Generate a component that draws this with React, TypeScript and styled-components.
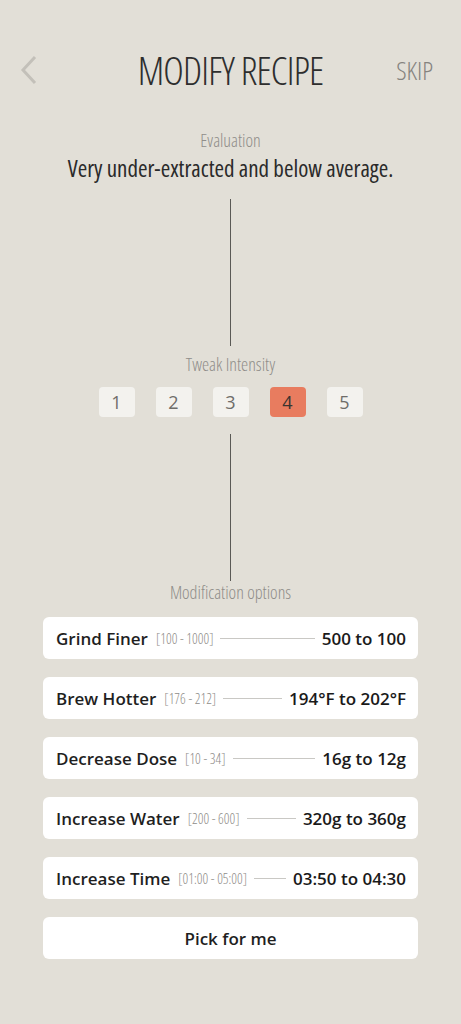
import React, { useState } from 'react';
import styled, { createGlobalStyle } from 'styled-components';

const GlobalStyle = createGlobalStyle`
  html, body {
    margin: 0;
    padding: 0;
    background: #e2dfd7;
  }
  body {
    font-family: "Open Sans", "DejaVu Sans", sans-serif;
  }
`;

// Open Sans is variable here, so the 75% width gives a condensed face
const condensed = `
  font-family: "Open Sans", "DejaVu Sans", sans-serif;
  font-stretch: 75%;
`;

const Screen = styled.div`
  width: 461px;
  min-height: 1024px;
  display: flex;
  flex-direction: column;
  align-items: center;
  background: #e2dfd7;
`;

const Header = styled.header`
  width: 100%;
  box-sizing: border-box;
  height: 44px;
  margin-top: 48px;
  padding: 0 20px;
  display: grid;
  grid-template-columns: 1fr auto 1fr;
  align-items: center;
`;

const BackButton = styled.button`
  border: 0;
  background: none;
  padding: 0;
  width: 26px;
  height: 32px;
  display: flex;
  align-items: center;
  cursor: pointer;
`;

const Title = styled.h1`
  margin: 0;
  text-align: center;
  ${condensed}
  font-weight: 300;
  font-size: 39px;
  line-height: 44px;
  letter-spacing: -0.8px;
  color: #2e2e2e;
`;

const Skip = styled.button`
  border: 0;
  background: none;
  padding: 0;
  margin-right: 8px;
  justify-self: end;
  ${condensed}
  font-weight: 300;
  font-size: 26px;
  color: #85837f;
  cursor: pointer;
`;

const Label = styled.div<{ $top: number }>`
  margin-top: ${(p) => p.$top}px;
  ${condensed}
  font-weight: 300;
  font-size: 18px;
  line-height: 20px;
  color: #8f8d89;
`;

const Evaluation = styled.div`
  margin-top: 4px;
  ${condensed}
  font-weight: 500;
  font-size: 23px;
  line-height: 28px;
  color: #2a2a2a;
`;

const Connector = styled.div<{ $top: number }>`
  margin-top: ${(p) => p.$top}px;
  width: 1px;
  height: 147px;
  background: #5a5955;
`;

const Intensities = styled.div`
  margin-top: 13px;
  display: flex;
  gap: 21px;
`;

const IntensityButton = styled.button<{ $active: boolean }>`
  width: 36px;
  height: 30px;
  border: 0;
  border-radius: 4px;
  padding: 0;
  background: ${(p) => (p.$active ? '#e87c5f' : '#f3f2ee')};
  color: ${(p) => (p.$active ? '#3a3430' : '#6f6d69')};
  font-family: "Open Sans", sans-serif;
  font-size: 18px;
  line-height: 30px;
  cursor: pointer;
`;

const Options = styled.div`
  margin-top: 15px;
  width: 375px;
  display: flex;
  flex-direction: column;
  gap: 18px;
`;

const Card = styled.div`
  height: 42px;
  box-sizing: border-box;
  padding: 0 12px 0 13px;
  background: #ffffff;
  border-radius: 6px;
  display: flex;
  align-items: center;
`;

const OptionName = styled.span`
  font-family: "Open Sans", sans-serif;
  font-weight: 600;
  font-size: 17px;
  color: #1f1f1f;
  white-space: nowrap;
`;

const Range = styled.span`
  margin-left: 8px;
  ${condensed}
  font-weight: 300;
  font-size: 14px;
  color: #8f8d89;
  white-space: nowrap;
`;

const Rule = styled.span`
  flex: 1;
  height: 1px;
  margin: 0 7px;
  background: #c9c8c4;
`;

const Value = styled.span`
  font-family: "Open Sans", sans-serif;
  font-weight: 600;
  font-size: 17px;
  color: #1a1a1a;
  white-space: nowrap;
`;

const PickButton = styled.button`
  height: 42px;
  border: 0;
  border-radius: 6px;
  background: #ffffff;
  font-family: "Open Sans", sans-serif;
  font-weight: 600;
  font-size: 17px;
  color: #1f1f1f;
  cursor: pointer;
`;

const options = [
  { name: 'Grind Finer', range: '[100 - 1000]', value: '500 to 100' },
  { name: 'Brew Hotter', range: '[176 - 212]', value: '194°F to 202°F' },
  { name: 'Decrease Dose', range: '[10 - 34]', value: '16g to 12g' },
  { name: 'Increase Water', range: '[200 - 600]', value: '320g to 360g' },
  { name: 'Increase Time', range: '[01:00 - 05:00]', value: '03:50 to 04:30' },
];

const App = () => {
  const [intensity, setIntensity] = useState(4);

  return (
    <Screen>
      <GlobalStyle />
      <Header>
        <BackButton aria-label="Back">
          <svg width="18" height="30" viewBox="0 0 18 30">
            <path d="M15 2 L3 15 L15 28" fill="none" stroke="#c3c0b9" strokeWidth="3" />
          </svg>
        </BackButton>
        <Title>MODIFY RECIPE</Title>
        <Skip>SKIP</Skip>
      </Header>

      <Label $top={38}>Evaluation</Label>
      <Evaluation>Very under-extracted and below average.</Evaluation>

      <Connector $top={17} />

      <Label $top={8}>Tweak Intensity</Label>
      <Intensities>
        {[1, 2, 3, 4, 5].map((n) => (
          <IntensityButton key={n} $active={n === intensity} onClick={() => setIntensity(n)}>
            {n}
          </IntensityButton>
        ))}
      </Intensities>

      <Connector $top={17} />

      <Label $top={1}>Modification options</Label>
      <Options>
        {options.map((o) => (
          <Card key={o.name}>
            <OptionName>{o.name}</OptionName>
            <Range>{o.range}</Range>
            <Rule />
            <Value>{o.value}</Value>
          </Card>
        ))}
        <PickButton>Pick for me</PickButton>
      </Options>
    </Screen>
  );
};

export default App;
